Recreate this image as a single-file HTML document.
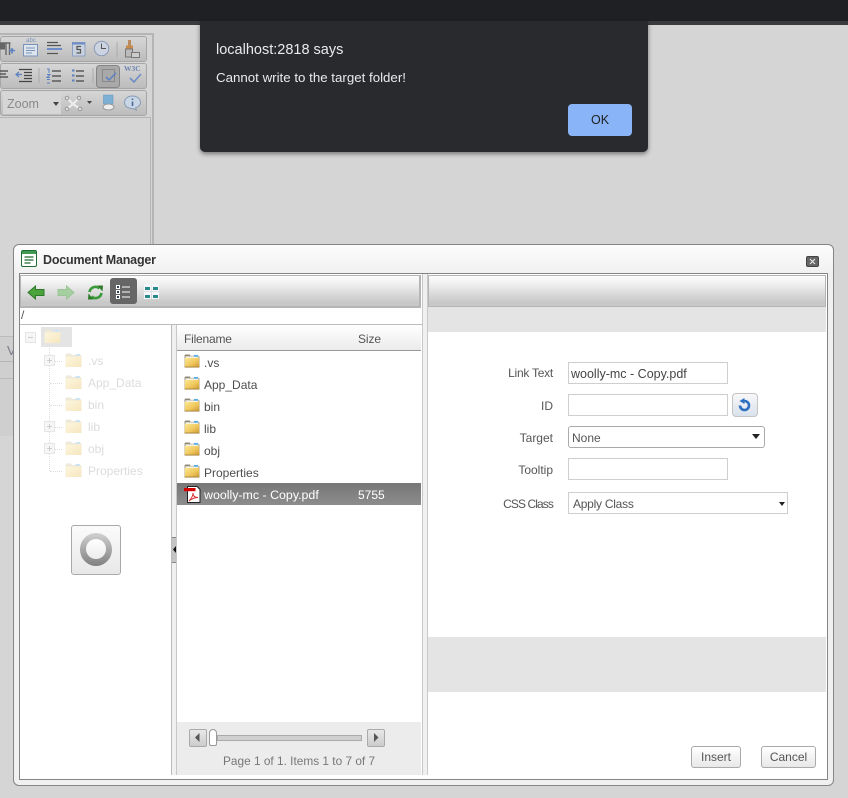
<!DOCTYPE html>
<html><head><meta charset="utf-8"><title>Document Manager</title>
<style>
html,body{margin:0;padding:0;width:848px;height:798px;overflow:hidden;background:#d5d5d5;font-family:"Liberation Sans",sans-serif;font-size:12px;color:#555}
div,span,svg{position:absolute;box-sizing:border-box}
.t{white-space:nowrap;line-height:16px}
.row{left:0;height:26px;border:1px solid #a6a6a6;border-radius:3px;background:linear-gradient(#d6d6d6,#bcbcbc);width:147px}
.fl{color:#4d4d4d;font-size:12px}
.lb{color:#555;text-align:right;width:80px;left:473px}
.inp{border:1px solid #cfcfcf;background:#fff;left:568px;width:160px;height:22px}
.bt{border:1px solid #aaa;border-radius:3px;background:linear-gradient(#fff,#e8e8e8);height:22px;top:746px;text-align:center;line-height:21px;color:#555}
.tr{color:#dcdcdc;font-size:12px}
.dt{border-left:1px dotted #ddd}
.dh{border-top:1px dotted #ddd;height:1px}
.pm{width:11px;height:11px;border:1px solid #e6e6e6;background:#f6f6f6}
.pm:before{content:"";position:absolute;left:2px;top:4px;width:5px;height:1px;background:#ccc}
.pl:after{content:"";position:absolute;left:4px;top:2px;width:1px;height:5px;background:#ccc}
.tb{background:linear-gradient(#fcfcfc,#f0f0f0 25%,#c8c8c8 88%)}
</style></head><body>
<svg width="0" height="0" style="left:0;top:0"><defs>
<linearGradient id="gold" x1="0" y1="0" x2="1" y2="1"><stop offset="0" stop-color="#fbe893"/><stop offset=".55" stop-color="#f0c85e"/><stop offset="1" stop-color="#cf9a33"/></linearGradient>
<linearGradient id="pale" x1="0" y1="0" x2="1" y2="1"><stop offset="0" stop-color="#fdf6dd"/><stop offset="1" stop-color="#f6e6bf"/></linearGradient>
<symbol id="f" viewBox="0 0 17 15"><path d="M.5 14V1.500L1.500.5H6l1 1.500h8.500l1 1V14z" fill="#8f8a78"/><path d="M1.500 2.500h14v2h-14z" fill="#f7f5ea"/><path d="M10.500 1h4.500v2h-4.500z" fill="#58aee2"/><path d="M.8 4.200h15.400V14H.8z" fill="url(#gold)"/><path d="M.5 14h16" stroke="#a5803c"/></symbol>
<symbol id="g" viewBox="0 0 17 15"><path d="M.5 14V1.500L1.500.5H6l1 1.500h8.500l1 1V14z" fill="#eee8d8"/><path d="M10.500 1h4.500v2h-4.500z" fill="#cfe5f2"/><path d="M.8 3.500h15.400V14H.8z" fill="url(#pale)"/></symbol>
</defs></svg>

<!-- background editor -->
<div style="left:0;top:0;width:848px;height:21px;background:#1f2023"></div>
<div style="left:0;top:21px;width:848px;height:4px;background:#3a3b3e"></div>
<div style="left:0;top:33px;width:154px;height:212px;border-top:2px solid #b5b5b5;border-right:2px solid #b5b5b5"></div>
<div style="left:0;top:117px;width:151px;height:128px;border-top:1px solid #b5b5b5;border-right:1px solid #b5b5b5"></div>
<div class="row" style="top:36px"></div>
<div class="row" style="top:63px"></div>
<div class="row" style="top:90px"></div>
<svg style="left:0;top:36px" width="148" height="80" viewBox="0 0 148 80" fill="none">
<path d="M0 7h5v6.500H0z" fill="#666"/><path d="M0 7h10.500M6 7v12M9.500 7v12" stroke="#666" stroke-width="1.400"/><path d="M9 14.500h6M12 12v5.500" stroke="#5a80c0" stroke-width="1.600"/>
<rect x="23.500" y="8.500" width="14" height="11.500" fill="#dfe5ee" stroke="#7a93b8"/><path d="M26 12h9M26 14.500h9M26 17h6" stroke="#7a93b8"/>
<path d="M47 6.500h11M47 9.500h14M47 17.500h11" stroke="#555" stroke-width="1.200"/><path d="M47 13h15" stroke="#6d8cc8" stroke-width="2"/>
<rect x="72.500" y="6.500" width="12.500" height="13.500" fill="#c9d2de" stroke="#8aa0c0"/><path d="M72 7.500h13" stroke="#6d8cc8" stroke-width="2"/><path d="M81 10.500h-4v3h3.500v3.500H76.500" stroke="#555" stroke-width="1.200"/>
<circle cx="101.500" cy="12.500" r="7.200" fill="#ccd4e2" stroke="#8a9ab5"/><path d="M101.500 7.500v5h4.500" stroke="#555"/>
<path d="M117 6v15" stroke="#aaa"/>
<rect x="128" y="4" width="3" height="6" fill="#b98a5e"/><path d="M126 9.500h7V13h-7z" fill="#c98a50"/><rect x="125.500" y="13" width="7" height="8" fill="#bbb" stroke="#777"/><rect x="131.500" y="16.500" width="8" height="5" fill="#ccc" stroke="#777"/>
<path d="M0 35h8M0 38h6M0 41h8" stroke="#444" stroke-width="1.300"/>
<path d="M19 33.500h13M24 36.500h8M24 39.500h8M24 42.500h8M19 45.500h13" stroke="#444" stroke-width="1.200"/><path d="M16 38.500h6M19 36l-3 2.500 3 2.500" stroke="#5a80c0" stroke-width="1.200"/>
<path d="M39 32v15" stroke="#aaa"/>
<path d="M47 33h2v4M47 38.500h3l-3 3h3M47 43.500h3M47 47h3" stroke="#5a80c0"/><path d="M52 35h9M52 40h9M52 45h9" stroke="#444" stroke-width="1.200"/>
<path d="M72 34.500h2.500M72 39.500h2.500M72 44.500h2.500" stroke="#5a80c0" stroke-width="2"/><path d="M76 35h8M76 40h8M76 45h8" stroke="#444" stroke-width="1.200"/>
<path d="M93 32v15" stroke="#aaa"/>
<rect x="96.500" y="29.500" width="23" height="22" rx="3" fill="#a9a9a9" stroke="#858585"/>
<rect x="102.500" y="33.500" width="12" height="12" stroke="#666" stroke-dasharray="1 1"/><path d="M106 41l3 3 7-7" stroke="#5a80c0" stroke-width="1.500"/>
<path d="M130 42l4 4 7-8" stroke="#6d8cc8" stroke-width="1.600"/>
<path d="M67 62l6 6M79 62l-6 6M73 68l-6 5M73 68l7 5" stroke="#eee" stroke-width="2"/><circle cx="67" cy="62" r="1.800" fill="#ddd" stroke="#999"/><circle cx="79" cy="62" r="1.800" fill="#ddd" stroke="#999"/><circle cx="67" cy="73" r="1.800" fill="#ddd" stroke="#999"/><circle cx="80" cy="73" r="1.800" fill="#ddd" stroke="#999"/>
<path d="M87 65h5l-2.500 3z" fill="#444"/>
<path d="M103.500 59h9.500v9h-9.500z" fill="#7cb0d4" stroke="#6a9abc" stroke-width=".6"/><ellipse cx="108.500" cy="71" rx="5.500" ry="3" fill="#eee" stroke="#999"/>
<path d="M132.500 60c-4.500 0-8 2.800-8 6.500s3.500 6 8 6l4 1.500-1-2.300c3-1 5-3 5-5.200 0-3.700-3.500-6.500-8-6.500z" fill="#c9d6e6" stroke="#8a9ab5"/><path d="M132.500 62.500v1.500M132.500 65.500v4.500" stroke="#4d6a9a" stroke-width="1.600"/>
</svg>
<span class="t" style="left:124px;top:64px;color:#6d85b0;font:bold 7.500px/10px 'Liberation Serif',serif;white-space:nowrap">W3C</span>
<span class="t" style="left:23px;top:38px;color:#7a93b8;font-size:6px;line-height:7px;width:16px;text-align:center">abc</span>
<div style="left:3px;top:92px;width:58px;height:22px;background:#d6d6d6"></div>
<span class="t" style="left:7px;top:96px;color:#8a8a8a;font-size:12.500px">Zoom</span>
<svg style="left:53px;top:102px" width="6" height="4"><path d="M0 0h6L3 4z" fill="#444"/></svg>
<div style="left:0;top:336px;width:13px;height:100px;background:#cfcfcf"></div>
<div style="left:0;top:336px;width:13px;height:1px;background:#bbb"></div>
<div style="left:0;top:361px;width:13px;height:1px;background:#b5b5b5"></div>
<div style="left:0;top:378px;width:13px;height:1px;background:#bbb"></div>
<span class="t" style="left:7px;top:343px;color:#7a7a8a;font-size:13px">V</span>

<!-- alert -->
<div style="left:200px;top:21px;width:448px;height:131px;background:#292a2d;border-radius:0 0 5px 5px;box-shadow:0 2px 5px rgba(0,0,0,.45)"></div>
<span class="t" style="left:216px;top:42px;color:#e8eaed;font-size:14.500px">localhost:2818 says</span>
<span class="t" style="left:216px;top:70px;color:#e8eaed;font-size:13.300px">Cannot write to the target folder!</span>
<div style="left:568px;top:104px;width:64px;height:32px;background:#8ab4f8;border-radius:4px;color:#202124;text-align:center;line-height:32px;font-size:12.500px">OK</div>

<!-- window -->
<div style="left:13px;top:244px;width:821px;height:542px;border:1px solid #858585;border-radius:6px;background:linear-gradient(#fdfdfd 0,#f0f0f0 30px,#f0f0f0)"></div>
<svg style="left:21px;top:250px" width="16" height="17" viewBox="0 0 16 17"><rect x=".5" y=".5" width="15" height="16" rx="1.500" fill="#fff" stroke="#1f6b35"/><rect x="1" y="1" width="14" height="3" fill="#3f9a52"/><path d="M3.500 7h9M3.500 10h9M3.500 13h6" stroke="#1f6b35" stroke-width="1.200"/></svg>
<span class="t" style="left:43px;top:252px;color:#333;font-weight:bold;font-size:12.500px;letter-spacing:-.2px">Document Manager</span>
<div style="left:806px;top:256px;width:13px;height:11px;background:#666;border:1px solid #444;border-radius:2px"></div>
<svg style="left:809px;top:258px" width="7" height="7"><path d="M1 1l5 5M6 1L1 6" stroke="#eee"/></svg>

<div style="left:19px;top:273px;width:809px;height:507px;border:1px solid #858585;background:#fff"></div>
<div style="left:422px;top:274px;width:6px;height:501px;background:#f0f0f0;border-left:1px solid #c8c8c8;border-right:1px solid #c8c8c8"></div>

<!-- left toolbar -->
<div class="tb" style="left:20px;top:275px;width:401px;height:33px;border:1px solid #b5b5b5;border-width:1px 2px 2px 1px"></div>
<svg style="left:27px;top:285px" width="18" height="15" viewBox="0 0 18 15"><path d="M1 7.500L8.500 1v3.500h8.500v6H8.500V14z" fill="#4ba33c" stroke="#2f7a2b"/></svg>
<svg style="left:57px;top:285px" width="18" height="15" viewBox="0 0 18 15"><path d="M17 7.500L9.500 1v3.500H1v6h8.500V14z" fill="#a5cfa0" stroke="#9cc597"/></svg>
<svg style="left:87px;top:284px" width="17" height="17" viewBox="0 0 17 17" fill="none"><path d="M2.500 8a6 6 0 0 1 10-3.500" stroke="#3a9a3a" stroke-width="2.600"/><path d="M14.500 9a6 6 0 0 1-10 3.500" stroke="#3a9a3a" stroke-width="2.600"/><path d="M10.500 1.500h5.500l-.5 6zM6.500 15.500H1l.5-6z" fill="#2f7a2b"/></svg>
<div style="left:110px;top:278px;width:27px;height:26px;border-radius:3px;background:#666"></div>
<svg style="left:115px;top:283px" width="18" height="18"><rect x="1" y="2" width="4" height="4" fill="#fff"/><rect x="1" y="7" width="4" height="4" fill="#fff"/><rect x="1" y="12" width="4" height="4" fill="#fff"/><rect x="2" y="3" width="2" height="2" fill="#345"/><rect x="2" y="8" width="2" height="2" fill="#345"/><rect x="2" y="13" width="2" height="2" fill="#345"/><path d="M7 4h8M7 9h8M7 14h8" stroke="#fff"/></svg>
<svg style="left:144px;top:284px" width="16" height="16"><g fill="#f4f6fa"><rect x="0" y="0" width="7" height="7"/><rect x="8" y="0" width="7" height="7"/><rect x="0" y="8" width="7" height="7"/><rect x="8" y="8" width="7" height="7"/></g><g fill="#2a8a8a"><rect x="1" y="3" width="5" height="3"/><rect x="9" y="3" width="5" height="3"/><rect x="1" y="11" width="5" height="3"/><rect x="9" y="11" width="5" height="3"/></g></svg>
<span class="t" style="left:21px;top:307px;color:#555;font-size:12px">/</span>
<div style="left:20px;top:324px;width:402px;height:1px;background:#bbb"></div>

<!-- tree -->
<div style="left:171px;top:325px;width:6px;height:450px;background:#f0f0f0;border-left:1px solid #bbb;border-right:1px solid #c8c8c8"></div>
<div style="left:172px;top:537px;width:4px;height:26px;background:#c4c4c4;border-top:1px solid #888;border-bottom:1px solid #888"></div>
<svg style="left:173px;top:546px" width="3" height="7"><path d="M3 0v7L0 3.500z" fill="#111"/></svg>
<div class="dt" style="left:49px;top:346px;height:125px"></div>
<div class="pm" style="left:25px;top:332px"></div>
<div style="left:41px;top:327px;width:31px;height:20px;background:#e4e4e4"></div>
<svg style="left:44px;top:329px" width="17" height="15"><use href="#g"/></svg>
<div class="dh" style="left:50px;top:361px;width:12px"></div><div class="dh" style="left:50px;top:383px;width:12px"></div><div class="dh" style="left:50px;top:405px;width:12px"></div><div class="dh" style="left:50px;top:427px;width:12px"></div><div class="dh" style="left:50px;top:449px;width:12px"></div><div class="dh" style="left:50px;top:471px;width:12px"></div>
<div class="pm pl" style="left:44px;top:355px"></div><div class="pm pl" style="left:44px;top:421px"></div><div class="pm pl" style="left:44px;top:443px"></div>
<svg style="left:65px;top:353px" width="17" height="15"><use href="#g"/></svg>
<svg style="left:65px;top:375px" width="17" height="15"><use href="#g"/></svg>
<svg style="left:65px;top:397px" width="17" height="15"><use href="#g"/></svg>
<svg style="left:65px;top:419px" width="17" height="15"><use href="#g"/></svg>
<svg style="left:65px;top:441px" width="17" height="15"><use href="#g"/></svg>
<svg style="left:65px;top:463px" width="17" height="15"><use href="#g"/></svg>
<span class="t tr" style="left:88px;top:353px">.vs</span>
<span class="t tr" style="left:88px;top:375px">App_Data</span>
<span class="t tr" style="left:88px;top:397px">bin</span>
<span class="t tr" style="left:88px;top:419px">lib</span>
<span class="t tr" style="left:88px;top:441px">obj</span>
<span class="t tr" style="left:88px;top:463px">Properties</span>
<div style="left:71px;top:525px;width:50px;height:50px;border:1px solid #aaa;border-radius:3px;background:linear-gradient(#fbfbfb,#e8e8e8)"></div>
<div style="left:80px;top:533px;width:32px;height:33px;border-radius:50%;background:linear-gradient(#d0d0d0,#808080)"></div>
<div style="left:86px;top:539px;width:20px;height:20px;border-radius:50%;background:linear-gradient(#fff,#ececec)"></div>

<!-- grid -->
<div style="left:177px;top:325px;width:244px;height:26px;background:linear-gradient(#fff,#ebebeb);border-bottom:1px solid #999"></div>
<span class="t" style="left:184px;top:331px;color:#555;font-size:12px;letter-spacing:-.2px">Filename</span>
<span class="t" style="left:358px;top:331px;color:#555;font-size:12px;letter-spacing:-.1px">Size</span>
<svg style="left:184px;top:354px" width="16" height="14"><use href="#f"/></svg>
<svg style="left:184px;top:376px" width="16" height="14"><use href="#f"/></svg>
<svg style="left:184px;top:398px" width="16" height="14"><use href="#f"/></svg>
<svg style="left:184px;top:420px" width="16" height="14"><use href="#f"/></svg>
<svg style="left:184px;top:442px" width="16" height="14"><use href="#f"/></svg>
<svg style="left:184px;top:464px" width="16" height="14"><use href="#f"/></svg>
<span class="t fl" style="left:204px;top:355px">.vs</span>
<span class="t fl" style="left:204px;top:377px">App_Data</span>
<span class="t fl" style="left:204px;top:399px">bin</span>
<span class="t fl" style="left:204px;top:421px">lib</span>
<span class="t fl" style="left:204px;top:443px">obj</span>
<span class="t fl" style="left:204px;top:465px">Properties</span>
<div style="left:177px;top:483px;width:244px;height:22px;background:linear-gradient(#767676,#8c8c8c)"></div>
<svg style="left:184px;top:486px" width="17" height="17" viewBox="0 0 17 17"><path d="M3.500 .5h9.500l3 3v13H3.500z" fill="#fff" stroke="#222"/><path d="M0 2h11.500v3.200H0z" fill="#d40000"/><path d="M5 15c3-3 4-5 4-8 0 3 2 4.500 5 4.500-3.500 0-6 1-9 3.500z" fill="none" stroke="#d83030"/></svg>
<span class="t" style="left:204px;top:487px;color:#fff;font-size:12.400px">woolly-mc - Copy.pdf</span>
<span class="t" style="left:358px;top:487px;color:#fff">5755</span>

<!-- pager -->
<div style="left:177px;top:722px;width:244px;height:53px;background:#ececec"></div>
<div style="left:189px;top:729px;width:18px;height:18px;border:1px solid #aaa;border-radius:2px;background:linear-gradient(#e8e8e8,#ccc)"></div>
<svg style="left:195px;top:733px" width="5" height="9"><path d="M4.500 0v9L0 4.500z" fill="#555"/></svg>
<div style="left:367px;top:729px;width:18px;height:18px;border:1px solid #aaa;border-radius:2px;background:linear-gradient(#e8e8e8,#ccc)"></div>
<svg style="left:374px;top:733px" width="5" height="9"><path d="M0 0v9l4.500-4.500z" fill="#555"/></svg>
<div style="left:217px;top:735px;width:145px;height:6px;background:#d0d0d0;border:1px solid #aaa"></div>
<div style="left:209px;top:729px;width:8px;height:17px;background:#fff;border:1px solid #999;border-radius:4px 4px 2px 2px"></div>
<span class="t" style="left:223px;top:753px;color:#777;font-size:11.850px">Page 1 of 1. Items 1 to 7 of 7</span>

<!-- right -->
<div class="tb" style="left:428px;top:275px;width:398px;height:32px;border:1px solid #b5b5b5"></div>
<div style="left:428px;top:307px;width:398px;height:25px;background:#e4e4e4"></div>
<div style="left:428px;top:637px;width:398px;height:55px;background:#e4e4e4"></div>
<span class="t lb" style="top:365px;font-size:12px;letter-spacing:-.25px">Link Text</span>
<span class="t lb" style="top:398px">ID</span>
<span class="t lb" style="top:430px">Target</span>
<span class="t lb" style="top:462px">Tooltip</span>
<span class="t lb" style="top:496px;font-size:12px;letter-spacing:-.9px">CSS Class</span>
<div class="inp" style="top:362px"></div>
<span class="t" style="left:571px;top:366px;color:#444;font-size:12.500px">woolly-mc - Copy.pdf</span>
<div class="inp" style="top:394px"></div>
<div style="left:732px;top:393px;width:26px;height:24px;border:1px solid #c4c4c4;border-radius:4px;background:linear-gradient(#f8f8f8,#d9e2ec)"></div>
<svg style="left:738px;top:398px" width="14" height="14" viewBox="0 0 14 14" fill="none"><path d="M6.500 3a4.500 4.500 0 1 1-4.500 4.500" stroke="#2f6fc0" stroke-width="2.600"/><path d="M1.500 3L6.500 0v6z" fill="#2f6fc0"/></svg>
<div style="left:568px;top:426px;width:197px;height:22px;border:1px solid #aaa;border-radius:3px;background:#fff"></div>
<span class="t" style="left:572px;top:430px;color:#555">None</span>
<svg style="left:752px;top:434px" width="9" height="5"><path d="M0 0h8L4 5z" fill="#222"/></svg>
<div class="inp" style="top:458px"></div>
<div style="left:568px;top:492px;width:220px;height:22px;border:1px solid #cfcfcf;background:#fff"></div>
<span class="t" style="left:573px;top:496px;color:#555;font-size:12px;letter-spacing:-.25px">Apply Class</span>
<svg style="left:779px;top:502px" width="7" height="4"><path d="M0 0h6L3 4z" fill="#222"/></svg>
<div class="bt" style="left:691px;width:50px">Insert</div>
<div class="bt" style="left:761px;width:55px">Cancel</div>
</body></html>
